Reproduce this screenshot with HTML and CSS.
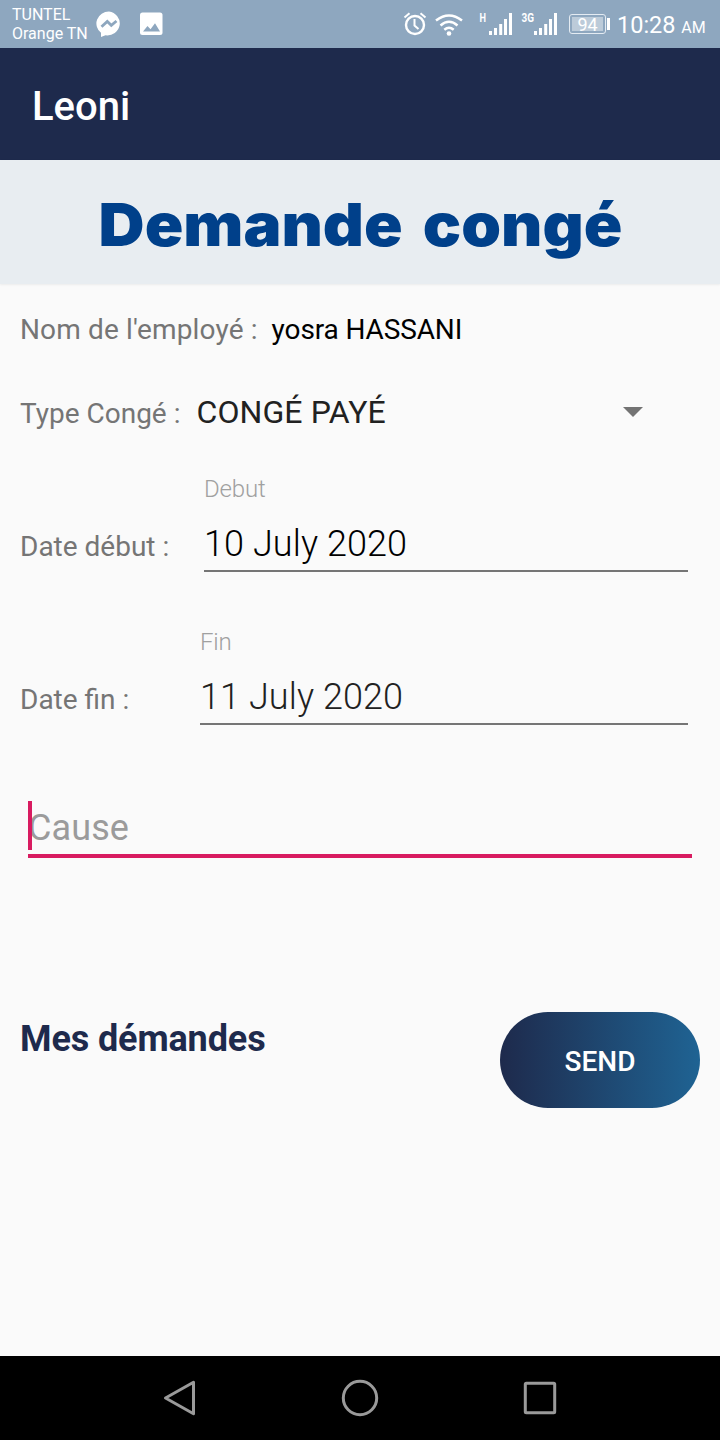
FILE: index.html
```html
<!DOCTYPE html>
<html lang="fr">
<head>
<meta charset="utf-8">
<title>Leoni</title>
<link rel="stylesheet" href="styles.css">
</head>
<body>
<div class="screen">
  <header class="status">
    <div class="carriers"><span>TUNTEL</span><span>Orange TN</span></div>
    <svg class="notifications" width="68" height="28" viewBox="0 0 68 28">
      <path fill="#fff" d="M13 1.500A12.500 12 0 1 1 9.500 25.300L5 27V22.800A12.500 12 0 0 1 13 1.500Z"/>
      <path fill="none" stroke="#8ea7bf" stroke-width="2.800" d="M5.500 16.800l5.800-5.300 4 3.800 5.200-4.300"/>
      <rect x="44" y="2.500" width="22.500" height="22.500" rx="2.500" fill="#fff"/>
      <path fill="#8ea7bf" d="M47 21.500l4.500-5.500 3 3.200 4.500-6 5 8.300z"/>
    </svg>
    <div class="indicators">
      <svg width="156" height="30" viewBox="0 0 156 30" fill="none" stroke="#fff">
        <circle cx="12" cy="16" r="9" stroke-width="2.400"/>
        <path stroke-width="2" d="M11.500 10v6.500l4 3.500M1.500 8.500l5-4.200M22.500 8.500l-5-4.200"/>
        <path stroke-width="2.500" d="M33 11.500Q46 1.500 59 11.500M37.500 16.500Q46 9 54.500 16.500M41.300 20.700Q46 16.800 50.700 20.700"/>
        <circle cx="46" cy="24.500" r="2.300" fill="#fff" stroke="none"/>
        <path stroke-width="3" d="M87.500 26v-4M92.500 26v-7M97.700 26v-11M102.500 26v-16M107.500 26V4M132.500 26v-4M137.500 26v-7M142.700 26v-11M147.500 26v-16M152.500 26V4"/>
        <text class="network" x="76.500" y="13" textLength="6.500" lengthAdjust="spacingAndGlyphs">H</text>
        <text class="network" x="118.500" y="13" textLength="12.500" lengthAdjust="spacingAndGlyphs">3G</text>
      </svg>
      <div class="battery"><span>94</span></div>
      <i class="battery-tip"></i>
      <div class="clock">10:28 <small>AM</small></div>
    </div>
  </header>
  <div class="appbar">Leoni</div>
  <h1 class="title"><span>Demande congé</span></h1>
  <main class="form">
    <div class="row name"><span class="label">Nom de l'employé :</span><span class="employee">yosra HASSANI</span></div>
    <div class="row type"><span class="label">Type Congé :</span><span class="selected">CONGÉ PAYÉ</span>
      <svg class="arrow" width="20" height="10" viewBox="0 0 20 10"><path fill="#737373" d="M0 0h20L10 10z"/></svg>
    </div>
    <div class="row date">
      <span class="label">Date début :</span>
      <div class="field start"><span class="hint">Debut</span><span class="value">10 July 2020</span></div>
    </div>
    <div class="row date">
      <span class="label">Date fin :</span>
      <div class="field end"><span class="hint">Fin</span><span class="value">11 July 2020</span></div>
    </div>
    <div class="cause"><i class="cursor"></i><span>Cause</span></div>
    <div class="actions"><h2 class="requests">Mes démandes</h2><button class="send">SEND</button></div>
  </main>
  <nav class="navbar">
    <svg width="40" height="40" viewBox="0 0 40 40"><path d="M5.500 20L33.500 4.300V35.700Z"/></svg>
    <svg width="40" height="40" viewBox="0 0 40 40"><circle cx="20" cy="20" r="16.700"/></svg>
    <svg width="40" height="40" viewBox="0 0 40 40"><rect x="5.300" y="5.300" width="29.400" height="29.400" rx="1"/></svg>
  </nav>
</div>
</body>
</html>
```
FILE: styles.css
```css
* { box-sizing: border-box; }
body { margin: 0; font-family: Roboto, "Liberation Sans", sans-serif; background: #fafafa; }
.screen { width: 720px; height: 1440px; display: flex; flex-direction: column; overflow: hidden; }
.status { height: 48px; flex: none; display: flex; align-items: center; background: #8ea7bf; color: #fff; padding: 0 15px 0 12px; }
.carriers { width: 84px; display: flex; flex-direction: column; font-size: 16px; line-height: 19px; padding-bottom: 1px; white-space: nowrap; }
.notifications { flex: none; }
.indicators { margin-left: auto; height: 48px; display: flex; align-items: center; }
.network { font: bold 13px Roboto, sans-serif; fill: #fff; stroke: none; }
.battery { width: 37px; height: 20px; margin-left: 10px; padding: 2px; border: 1.500px solid #e4ebf2; border-radius: 3px; }
.battery span { display: block; height: 100%; background: #bccbd9; text-align: center; font-size: 18px; line-height: 15px; }
.battery-tip { width: 3px; height: 12px; margin: 0 7px 0 1px; background: #fff; }
.clock { width: 88px; font-size: 23.500px; line-height: 30px; white-space: nowrap; padding-top: 4px; }
.clock small { font-size: 16px; }
.appbar { height: 112px; flex: none; padding: 5px 32px 0; background: #1e2a4c; color: #fff; font-size: 40px; font-weight: 500; line-height: 108px; }
.title { height: 124px; flex: none; margin: 0; background: #e8edf1; color: #00408a; box-shadow: 0 1px 2px rgba(0,0,0,.06); text-align: center; font: 900 59px/124px Inter, "Liberation Sans", sans-serif; padding-top: 3px; white-space: nowrap; }
.title span { display: inline-block; transform: scaleX(1.08); word-spacing: 7px; }
.form { flex: 1; padding: 26px 20px 0; }
.row { display: flex; }
.label { font-size: 28px; line-height: 40px; color: #757575; white-space: nowrap; }
.name { height: 82px; gap: 14px; }
.name .label { letter-spacing: .13px; }
.employee { font-size: 28px; line-height: 40px; letter-spacing: -.12px; color: #000; }
.type { height: 82px; align-items: baseline; gap: 16px; }
.selected { font-size: 32px; line-height: 40px; letter-spacing: .1px; color: #212121; }
.arrow { margin: 15px 57px 0 auto; align-self: flex-start; }
.date { height: 98px; margin-bottom: 55px; align-items: flex-end; justify-content: space-between; padding-right: 12px; }
.date .label { padding-bottom: 5px; height: 45px; }
.field { display: flex; flex-direction: column; height: 98px; border-bottom: 2px solid #757575; }
.start { width: 484px; }
.end { width: 488px; }
.hint { font-size: 24px; line-height: 30px; font-weight: 300; letter-spacing: -.15px; color: #a0a0a0; }
.value { font-size: 36px; line-height: 44px; margin-top: 18px; font-weight: 300; letter-spacing: .08px; color: #000; }
.end .value { color: #212121; }
.cause { height: 57px; margin: 76px 8px 0; border-bottom: 4px solid #d81b60; display: flex; font-size: 36px; line-height: 54px; letter-spacing: .1px; color: #9b9b9b; }
.cursor { width: 4px; height: 49px; margin-right: -4px; background: #d81b60; z-index: 1; }
.actions { margin-top: 154px; display: flex; justify-content: space-between; align-items: flex-start; }
.requests { margin: 5px 0 0; font-size: 36px; line-height: 44px; font-weight: 700; letter-spacing: -.12px; color: #1e2a4c; }
.send { width: 200px; height: 96px; padding: 3px 0 0; border: 0; border-radius: 48px; background: linear-gradient(90deg, #1e2a4c, #1f6393); color: #fff; font: 500 28px/32px Roboto, sans-serif; }
.navbar { height: 84px; flex: none; display: flex; align-items: center; justify-content: space-between; padding: 0 160px; background: #000; }
.navbar svg { fill: none; stroke: #9a9a9a; stroke-width: 3; stroke-linejoin: round; }
```
